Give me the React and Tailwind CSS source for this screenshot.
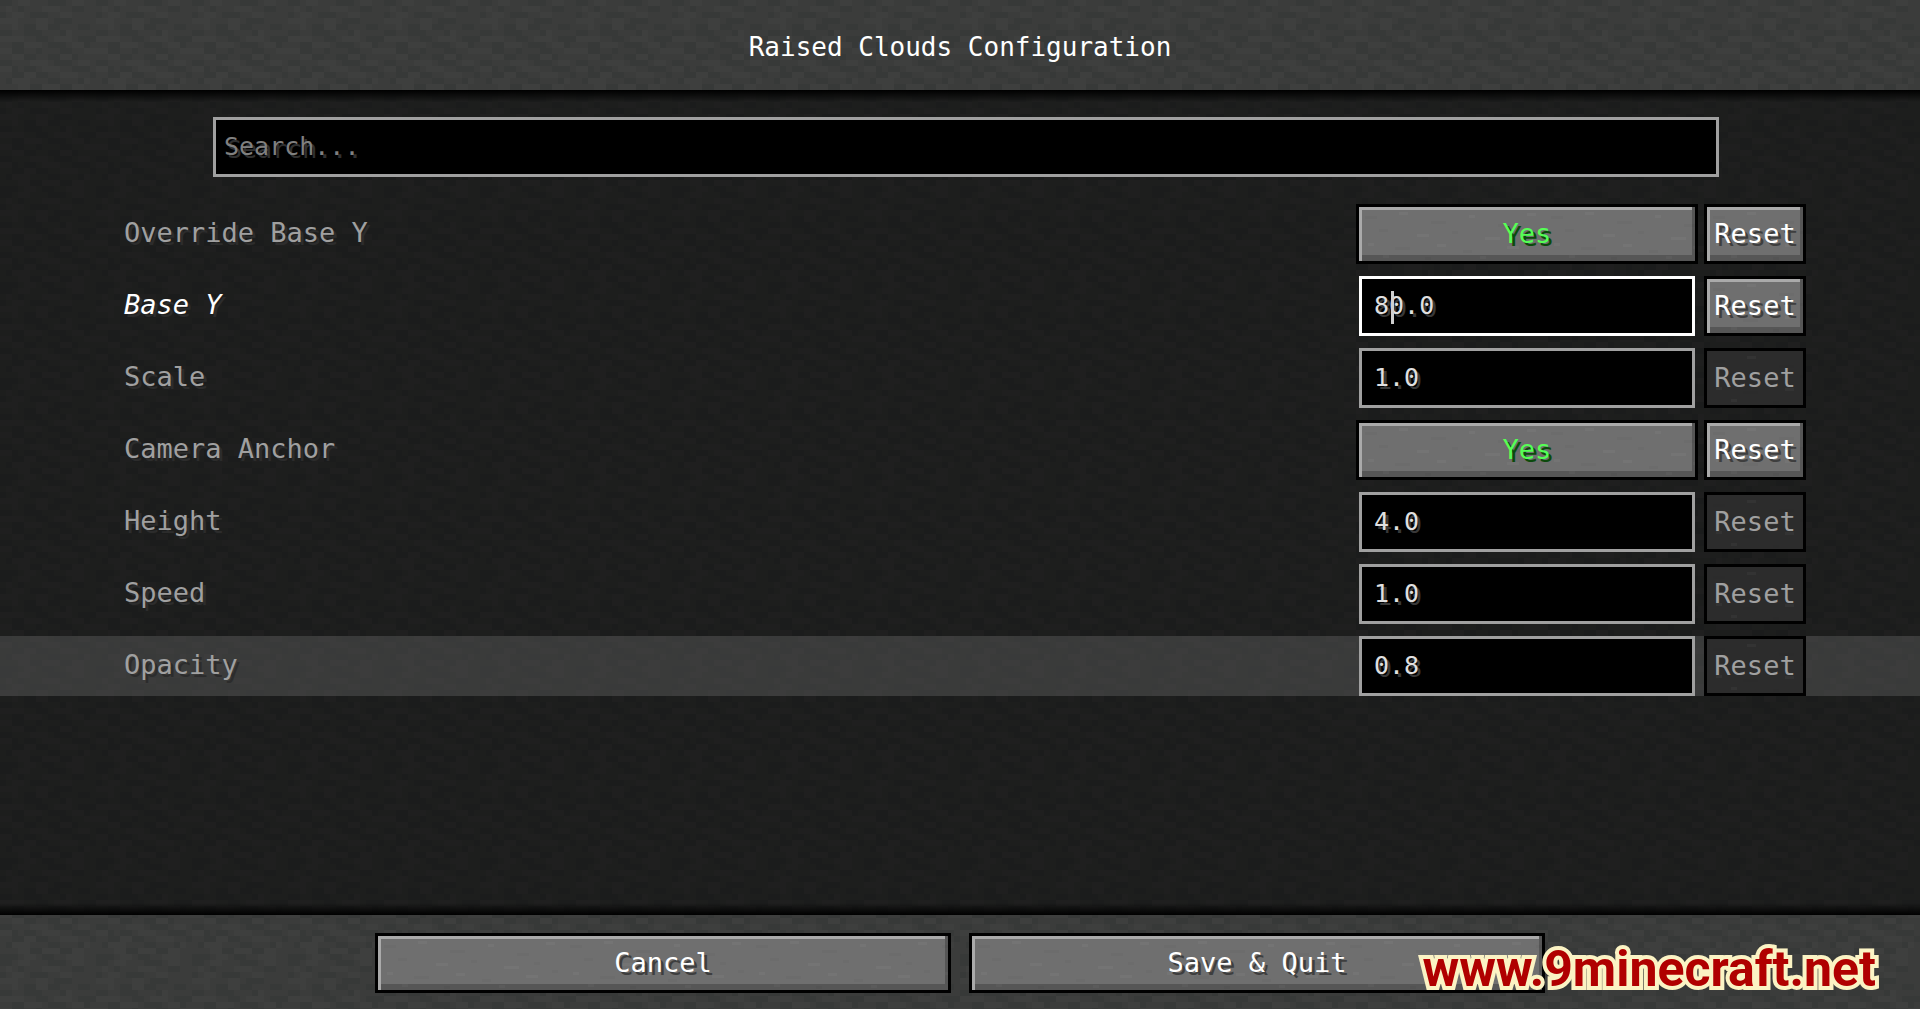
import React from 'react';
import { clsx } from 'clsx';

const OPTIONS = [
  { id: 'override-base-y', label: 'Override Base Y', type: 'toggle', value: 'Yes', changed: true },
  { id: 'base-y', label: 'Base Y', type: 'number', value: '80.0', changed: true, active: true },
  { id: 'scale', label: 'Scale', type: 'number', value: '1.0' },
  { id: 'camera-anchor', label: 'Camera Anchor', type: 'toggle', value: 'Yes', changed: true },
  { id: 'height', label: 'Height', type: 'number', value: '4.0' },
  { id: 'speed', label: 'Speed', type: 'number', value: '1.0' },
  { id: 'opacity', label: 'Opacity', type: 'number', value: '0.8', hovered: true },
];

// x, y, width in cells of a 16x16 tile
const DARK_CELLS = [
  [0, 0, 2], [8, 0, 3], [3, 1, 1], [12, 1, 2], [0, 2, 1], [5, 2, 3], [9, 3, 3], [4, 4, 2],
  [8, 4, 2], [13, 4, 2], [0, 5, 2], [4, 5, 3], [10, 5, 2], [6, 6, 2], [13, 6, 3], [2, 7, 2],
  [8, 7, 3], [14, 7, 1], [2, 8, 2], [6, 8, 1], [10, 8, 2], [4, 9, 2], [8, 9, 2], [12, 9, 1],
  [0, 10, 2], [9, 10, 3], [2, 11, 1], [4, 11, 2], [12, 11, 3], [2, 12, 2], [6, 12, 2], [15, 12, 1],
  [1, 13, 1], [8, 13, 2], [13, 13, 2], [5, 14, 2], [10, 14, 2], [0, 15, 3], [7, 15, 2],
];

const LIGHT_CELLS = [
  [3, 0, 2], [12, 0, 2], [1, 1, 1], [7, 1, 3], [2, 2, 2], [10, 2, 2], [0, 3, 3], [6, 3, 2],
  [2, 4, 1], [6, 4, 2], [11, 5, 1], [0, 6, 4], [9, 6, 3], [4, 7, 3], [12, 7, 2], [0, 8, 2],
  [14, 8, 2], [2, 9, 2], [10, 9, 2], [5, 10, 3], [13, 10, 2], [0, 11, 2], [7, 11, 3], [4, 12, 2],
  [10, 12, 3], [2, 13, 3], [14, 13, 1], [3, 14, 2], [7, 14, 3], [12, 14, 2], [4, 15, 2], [11, 15, 3],
];

const STONE_SPECKS = [
  [6, 9, 12], [40, 5, 9], [72, 14, 15], [110, 8, 6], [139, 17, 12], [168, 6, 9], [20, 22, 9], [58, 27, 12],
  [93, 24, 6], [126, 30, 15], [156, 26, 6], [9, 36, 6], [36, 40, 15], [78, 37, 9], [104, 43, 9], [148, 39, 12],
  [174, 34, 6], [24, 48, 6], [66, 50, 6], [121, 49, 6],
];

const WoolTexture = () => (
  <svg className="absolute inset-0 -z-10 h-full w-full" aria-hidden="true" shapeRendering="crispEdges">
    <defs>
      <pattern id="wool" width="96" height="96" patternUnits="userSpaceOnUse">
        <rect width="96" height="96" fill="#3b3c3b" />
        {DARK_CELLS.map(([x, y, w]) => (
          <rect key={`d${x}-${y}`} x={x * 6} y={y * 6} width={w * 6} height="6" fill="#373938" />
        ))}
        {LIGHT_CELLS.map(([x, y, w]) => (
          <rect key={`l${x}-${y}`} x={x * 6} y={y * 6} width={w * 6} height="6" fill="#3e3f3e" />
        ))}
      </pattern>
      <pattern id="stone" width="186" height="54" patternUnits="userSpaceOnUse">
        {STONE_SPECKS.map(([x, y, w], i) => (
          <rect key={`${x}-${y}`} x={x} y={y} width={w} height="3" fill={i % 2 ? '#ffffff' : '#000000'} fillOpacity="0.03" />
        ))}
      </pattern>
    </defs>
    <rect width="100%" height="100%" fill="url(#wool)" />
  </svg>
);

const StoneButton = ({ className, disabled, children, ...props }) => (
  <button
    type="button"
    disabled={disabled}
    className={clsx(
      'relative isolate h-[60px] border-3 border-black text-center text-[27px] whitespace-nowrap',
      disabled
        ? 'bg-[#2c2c2c] text-[#a0a0a0]'
        : 'bg-[#6f6f6f] text-white [text-shadow:3px_3px_#3e3e3e] shadow-[inset_3px_0_#aaaaaa,inset_-3px_-6px_#565656,inset_0_3px_#aaaaaa]',
      className
    )}
    {...props}
  >
    <svg className="absolute inset-0 -z-10 h-full w-full" aria-hidden="true">
      <rect width="100%" height="100%" fill="url(#stone)" />
    </svg>
    {children}
  </button>
);

const OptionControl = ({ option }) => {
  if (option.type === 'toggle') {
    return (
      <StoneButton id={option.id} className="w-[342px] text-[#55ff55]! [text-shadow:3px_3px_#0b4a0b]!">
        {option.value}
      </StoneButton>
    );
  }

  return (
    <div className="relative mx-[3px] w-[336px]">
      <input
        id={option.id}
        type="text"
        inputMode="decimal"
        defaultValue={option.value}
        className={clsx(
          'block h-[60px] w-full border-3 bg-black px-3 pb-0.5 text-[25px] text-[#e0e0e0] outline-none [text-shadow:3px_3px_#383838]',
          option.active ? 'border-white' : 'border-[#a0a0a0]'
        )}
      />
      {option.active && <span className="absolute top-[15px] left-[32px] h-[33px] w-[3px] bg-[#d0d0d0]" />}
    </div>
  );
};

const OptionRow = ({ option }) => (
  <div className={clsx('flex items-center pr-[114px] pl-[124px]', option.hovered && 'bg-white/13')}>
    <label
      htmlFor={option.id}
      className={clsx(
        'flex-1 pb-0.5 text-[27px] [text-shadow:3px_3px_#2c2c2c]',
        option.active ? 'text-white italic' : 'text-[#a0a0a0]'
      )}
    >
      {option.label}
    </label>
    <OptionControl option={option} />
    <StoneButton className="ml-[6px] w-[102px]" disabled={!option.changed} aria-label={`Reset ${option.label}`}>
      Reset
    </StoneButton>
  </div>
);

const App = () => {
  return (
    <div className="relative isolate flex min-h-screen flex-col overflow-hidden font-['DejaVu_Sans_Mono','Liberation_Mono',monospace] text-[26px] leading-8">
      <WoolTexture />

      <header className="flex h-[90px] items-center justify-center pt-1">
        <h1 className="text-white">Raised Clouds Configuration</h1>
      </header>

      <main className="flex flex-1 flex-col bg-black/50">
        <div className="h-3 bg-linear-to-b from-black to-transparent" />
        <div className="mt-[15px] mr-[201px] ml-[213px]">
          <input
            type="search"
            aria-label="Search"
            placeholder="Search..."
            className="block h-[60px] w-full border-3 border-[#a0a0a0] bg-black px-2 pb-0.5 text-[25px] text-[#e0e0e0] outline-none placeholder:text-[#808080] [text-shadow:3px_3px_#303030]"
          />
        </div>
        <div className="mt-[27px] flex flex-col gap-3">
          {OPTIONS.map((option) => (
            <OptionRow key={option.id} option={option} />
          ))}
        </div>
        <div className="mt-auto h-3 bg-linear-to-t from-black to-transparent" />
      </main>

      <footer className="flex justify-center gap-[18px] pt-[18px] pb-4">
        <StoneButton className="w-[576px]">Cancel</StoneButton>
        <StoneButton className="w-[576px]">Save &amp; Quit</StoneButton>
      </footer>

      <a
        href="#site"
        className="absolute right-[44px] bottom-2 font-['Roboto',sans-serif] text-[50px] leading-[64px] font-bold text-[#b00000] [paint-order:stroke_fill] [-webkit-text-stroke:8px_#fbf3c4]"
      >
        www.9minecraft.net
      </a>
    </div>
  );
};

export default App;
